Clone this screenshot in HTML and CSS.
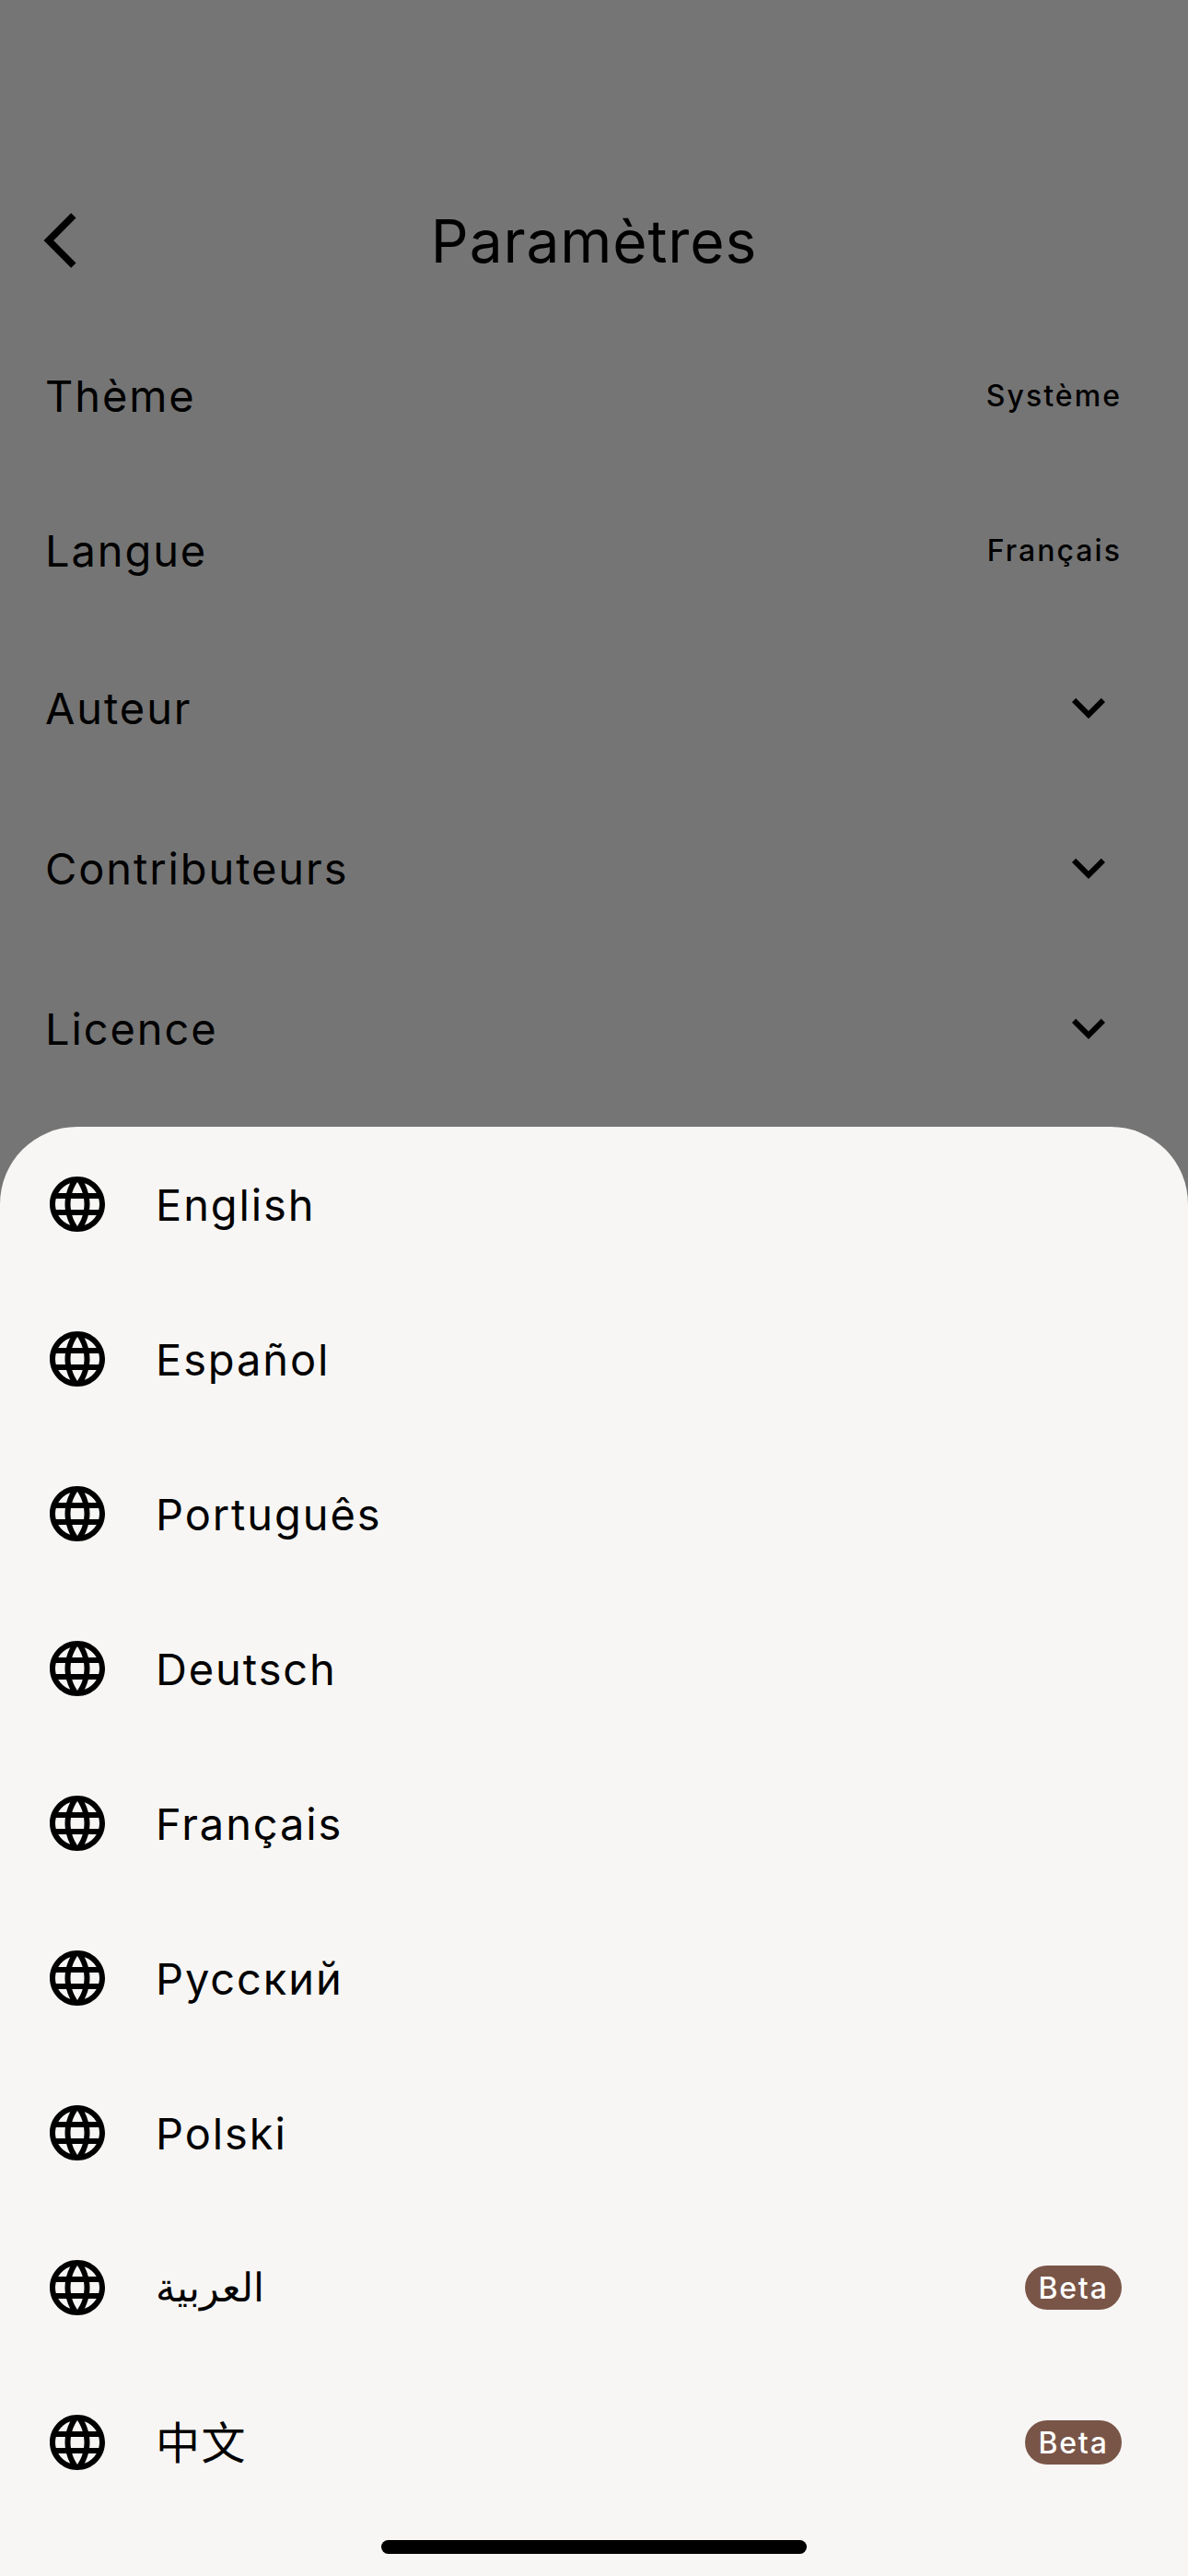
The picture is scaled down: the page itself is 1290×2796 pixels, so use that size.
FILE: index.html
```html
<!DOCTYPE html>
<html lang="fr">
<head>
<meta charset="utf-8">
<title>Paramètres</title>
<link rel="stylesheet" href="styles.css">
</head>
<body>
<svg class="defs" width="0" height="0">
<symbol id="globe" viewBox="0 0 24 24"><path d="M11.99 2C6.47 2 2 6.48 2 12s4.47 10 9.99 10C17.52 22 22 17.52 22 12S17.52 2 11.99 2zm6.93 6h-2.95c-.32-1.25-.78-2.45-1.38-3.56 1.84.63 3.37 1.91 4.33 3.56zM12 4.04c.83 1.2 1.48 2.53 1.91 3.96h-3.82c.43-1.43 1.08-2.76 1.91-3.96zM4.26 14C4.1 13.36 4 12.69 4 12s.1-1.36.26-2h3.38c-.08.66-.14 1.32-.14 2s.06 1.34.14 2H4.26zm.82 2h2.95c.32 1.25.78 2.45 1.38 3.56-1.84-.63-3.37-1.9-4.33-3.56zm2.95-8H5.08c.96-1.66 2.49-2.93 4.33-3.56C8.81 5.55 8.35 6.75 8.03 8zM12 19.96c-.83-1.2-1.48-2.53-1.91-3.96h3.82c-.43 1.43-1.08 2.76-1.91 3.96zM14.34 14H9.66c-.09-.66-.16-1.32-.16-2s.07-1.35.16-2h4.68c.09.65.16 1.32.16 2s-.07 1.34-.16 2zm.25 5.56c.6-1.11 1.06-2.31 1.38-3.56h2.95c-.96 1.65-2.49 2.93-4.33 3.56zM16.36 14c.08-.66.14-1.32.14-2s-.06-1.34-.14-2h3.38c.16.64.26 1.31.26 2s-.1 1.36-.26 2h-3.38z"/></symbol>
<symbol id="down" viewBox="0 0 24 24"><path d="M7.41 8.59 12 13.17l4.59-4.58L18 10l-6 6-6-6z"/></symbol>
</svg>
<header class="bar">
<svg class="back" viewBox="0 0 24 24"><path d="M17.51 3.87 15.73 2.1 5.84 12l9.9 9.9 1.77-1.77L9.38 12z"/></svg>
<h1 class="title">Paramètres</h1>
</header>
<main class="settings">
<div class="row"><span class="label">Thème</span><span class="value">Système</span></div>
<div class="row"><span class="label">Langue</span><span class="value">Français</span></div>
<div class="row tall"><span class="label">Auteur</span><svg class="chev"><use href="#down"/></svg></div>
<div class="row tall"><span class="label">Contributeurs</span><svg class="chev"><use href="#down"/></svg></div>
<div class="row tall"><span class="label">Licence</span><svg class="chev"><use href="#down"/></svg></div>
</main>
<section class="sheet">
<div class="lang"><svg class="globe"><use href="#globe"/></svg><span class="label">English</span></div>
<div class="lang"><svg class="globe"><use href="#globe"/></svg><span class="label">Español</span></div>
<div class="lang"><svg class="globe"><use href="#globe"/></svg><span class="label">Português</span></div>
<div class="lang"><svg class="globe"><use href="#globe"/></svg><span class="label">Deutsch</span></div>
<div class="lang"><svg class="globe"><use href="#globe"/></svg><span class="label">Français</span></div>
<div class="lang"><svg class="globe"><use href="#globe"/></svg><span class="label">Русский</span></div>
<div class="lang"><svg class="globe"><use href="#globe"/></svg><span class="label">Polski</span></div>
<div class="lang"><svg class="globe"><use href="#globe"/></svg><span class="arabic" lang="ar">العربية</span><span class="badge">Beta</span></div>
<div class="lang"><svg class="globe"><use href="#globe"/></svg><span class="chinese" lang="zh">中文</span><span class="badge">Beta</span></div>
<div class="home"></div>
</section>
</body>
</html>
```
FILE: styles.css
```css
* { box-sizing: border-box; }
body { margin: 0; height: 2796px; overflow: hidden; background: #757575; color: #000; font: 400 47px/1.2 Inter, "Noto Sans", "Noto Sans CJK SC", sans-serif; letter-spacing: 1.9px; display: flex; flex-direction: column; }
.defs { position: absolute; }
.bar { height: 168px; margin-top: 177px; display: grid; grid-template-columns: 150px 1fr 150px; align-items: center; }
.back { width: 72px; height: 72px; margin-left: 30px; }
.title { margin: 0; padding-top: 2px; text-align: center; font-size: 64px; font-weight: 400; letter-spacing: 0.9px; }
.settings { height: 878px; }
.row { height: 168px; padding: 0 72px 0 49px; display: flex; align-items: center; justify-content: space-between; }
.tall { height: 174px; }
.label { padding-top: 2px; }
.value { padding-top: 2px; font-size: 32px; font-weight: 500; letter-spacing: 2.05px; }
.chev { width: 72px; height: 72px; }
.sheet { height: 1573px; background: #f7f6f4; border-radius: 84px 84px 0 0; display: flex; flex-direction: column; }
.lang { height: 168px; padding: 0 72px 0 48px; display: flex; align-items: center; }
.globe { width: 72px; height: 72px; margin-right: 49px; }
.arabic { font-size: 43px; letter-spacing: 0; }
.chinese { font-family: Inter, "Noto Sans CJK SC", sans-serif; font-size: 48px; letter-spacing: 1.5px; padding-top: 2px; }
.badge { margin-left: auto; width: 105px; height: 48px; padding-top: 1px; border-radius: 24px; background: #795548; color: #fff; font-size: 32px; font-weight: 500; letter-spacing: 1.8px; line-height: 48px; text-align: center; }
.home { width: 462px; height: 15px; border-radius: 8px; background: #000; margin: 22px auto 0; }
```
